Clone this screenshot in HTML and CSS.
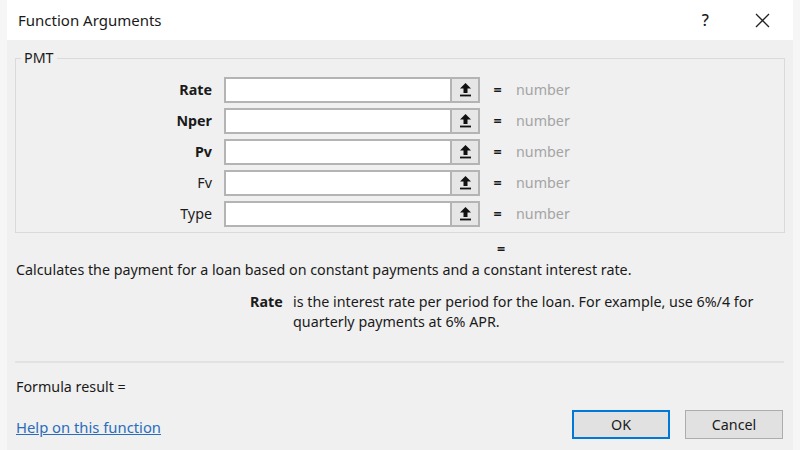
FILE: index.html
```html
<!DOCTYPE html>
<html>
<head>
<meta charset="utf-8">
<link rel="stylesheet" href="styles.css">
</head>
<body>
<div class="window">
  <div class="titlebar">
    <span class="title">Function Arguments</span>
    <div class="tb-buttons">
      <span class="help">?</span>
      <svg class="close" width="15" height="15" viewBox="0 0 15 15"><path d="M1 1L14 14M14 1L1 14" stroke="#222" stroke-width="1.3" fill="none"/></svg>
    </div>
  </div>
  <div class="content">
    <fieldset class="group">
      <legend>PMT</legend>
      <div class="args">
        <div class="lbl b">Rate</div><div class="field"><div class="inp"></div><div class="ref"><svg width="13" height="15" viewBox="0 0 13 15"><path d="M6.5 1L1 6.5H4.5V11H8.5V6.5H12Z" fill="#111"/><rect x="1" y="12.6" width="11" height="1.8" fill="#111"/></svg></div></div><div class="eq">=</div><div class="val">number</div>
        <div class="lbl b">Nper</div><div class="field"><div class="inp"></div><div class="ref"><svg width="13" height="15" viewBox="0 0 13 15"><path d="M6.5 1L1 6.5H4.5V11H8.5V6.5H12Z" fill="#111"/><rect x="1" y="12.6" width="11" height="1.8" fill="#111"/></svg></div></div><div class="eq">=</div><div class="val">number</div>
        <div class="lbl b">Pv</div><div class="field"><div class="inp"></div><div class="ref"><svg width="13" height="15" viewBox="0 0 13 15"><path d="M6.5 1L1 6.5H4.5V11H8.5V6.5H12Z" fill="#111"/><rect x="1" y="12.6" width="11" height="1.8" fill="#111"/></svg></div></div><div class="eq">=</div><div class="val">number</div>
        <div class="lbl">Fv</div><div class="field"><div class="inp"></div><div class="ref"><svg width="13" height="15" viewBox="0 0 13 15"><path d="M6.5 1L1 6.5H4.5V11H8.5V6.5H12Z" fill="#111"/><rect x="1" y="12.6" width="11" height="1.8" fill="#111"/></svg></div></div><div class="eq">=</div><div class="val">number</div>
        <div class="lbl">Type</div><div class="field"><div class="inp"></div><div class="ref"><svg width="13" height="15" viewBox="0 0 13 15"><path d="M6.5 1L1 6.5H4.5V11H8.5V6.5H12Z" fill="#111"/><rect x="1" y="12.6" width="11" height="1.8" fill="#111"/></svg></div></div><div class="eq">=</div><div class="val">number</div>
      </div>
    </fieldset>
    <div class="result-eq">=</div>
    <p class="desc">Calculates the payment for a loan based on constant payments and a constant interest rate.</p>
    <div class="argdesc">
      <span class="argname">Rate</span>
      <span class="argtext">is the interest rate per period for the loan. For example, use 6%/4 for quarterly payments at 6% APR.</span>
    </div>
    <div class="sep"></div>
    <div class="formula">Formula result =</div>
    <div class="footer">
      <a class="helplink" href="#">Help on this function</a>
      <div class="buttons">
        <button class="btn ok">OK</button>
        <button class="btn">Cancel</button>
      </div>
    </div>
  </div>
</div>
</body>
</html>
```
FILE: styles.css
```css
* { box-sizing: border-box; }
html, body { margin: 0; padding: 0; }
body {
  width: 800px;
  height: 450px;
  background: #f6f6f6;
  font-family: "Noto Sans", "Open Sans", sans-serif;
  font-size: 14.3px;
  color: #1a1a1a;
  overflow: hidden;
}
.window {
  margin: 0 7px;
  width: 786px;
  height: 450px;
  background: #f0f0f0;
}
.titlebar {
  height: 40px;
  background: #fff;
  display: flex;
  align-items: center;
  justify-content: space-between;
  padding: 0 23px 0 11px;
}
.title { font-size: 15px; color: #1a1a1a; }
.tb-buttons { display: flex; align-items: center; gap: 46px; }
.help { font-size: 16px; font-weight: 500; }
.close { display: block; }
.content { padding: 0 8px 0 8px; }
.group {
  margin: 10px 0 0 0;
  border: 1px solid #dadada;
  padding: 0;
  height: 183px;
}
.group legend {
  margin-left: 5px;
  padding: 0 3px;
  font-size: 14.3px;
  line-height: 16px;
}
.args {
  display: grid;
  grid-template-columns: 208px 256px 35px auto;
  grid-auto-rows: 31px;
  align-items: center;
  margin-top: 8px;
}
.lbl { text-align: right; padding-right: 12px; }
.b { font-weight: bold; }
.field {
  display: flex;
  height: 26px;
  border: 2px solid #b4b4b4;
  background: #fff;
}
.inp { flex: 1; }
.ref {
  width: 28px;
  background: #e6e6e6;
  border-left: 2px solid #b4b4b4;
  display: flex;
  align-items: center;
  justify-content: center;
}
.eq { text-align: center; font-weight: bold; }
.val { color: #a4a4a4; padding-left: 1px; }
.result-eq { margin: 7px 0 0 482px; line-height: 18px; font-weight: bold; }
.desc { margin: 2px 0 0 1px; line-height: 20px; }
.argdesc { display: flex; margin: 12px 0 0 235px; line-height: 20px; }
.argname { font-weight: bold; width: 43px; flex: none; }
.argtext { width: 475px; }
.sep { height: 2px; background: #e2e2e2; margin: 29px 1px 0 0; }
.formula { margin: 14px 0 0 1px; line-height: 20px; }
.footer {
  display: flex;
  justify-content: space-between;
  align-items: center;
  margin-top: 13px;
}
.helplink { color: #2a6ebb; text-decoration: underline; margin: 4px 0 0 1px; line-height: 20px; font-size: 14.8px; }
.buttons { display: flex; gap: 15px; margin-right: 2px; }
.btn {
  width: 98px;
  height: 29px;
  font-family: inherit;
  font-size: 14.3px;
  color: #1a1a1a;
  background: #e1e1e1;
  border: 1px solid #adadad;
  padding: 0;
}
.btn.ok { border: 2px solid #0078d7; }
```
